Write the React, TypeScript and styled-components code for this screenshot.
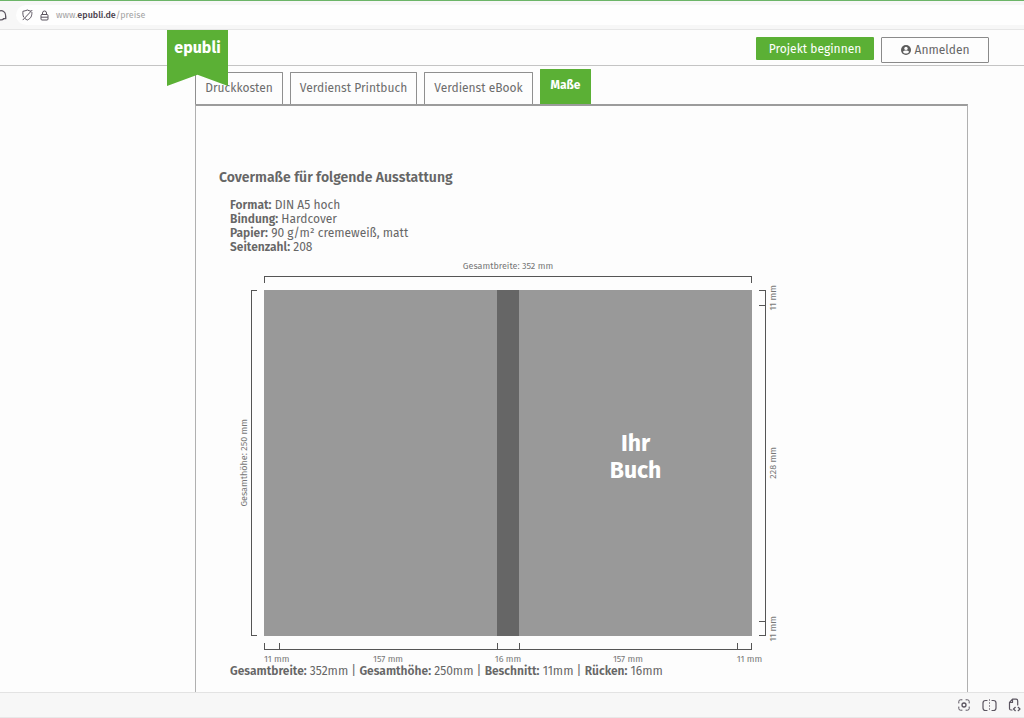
import React from "react";
import styled, { createGlobalStyle } from "styled-components";

const GlobalStyle = createGlobalStyle`
  * { box-sizing: border-box; }
  body {
    margin: 0;
    background: #fdfdfd;
    color: #666;
    font-family: "Fira Sans", "Noto Sans", sans-serif;
    font-size: 12px;
    line-height: 14px;
  }
`;

const Window = styled.div`
  min-height: 100vh;
  display: flex;
  flex-direction: column;
`;

const BrowserBar = styled.div`
  height: 30px;
  flex: none;
  display: flex;
  align-items: center;
  gap: 9px;
  background: #f7f7f7;
  border-top: 1px solid #6cb568;
  border-bottom: 1px solid #e6e6e6;
  overflow: hidden;
`;

const IconButton = styled.button`
  display: flex;
  padding: 0;
  border: 0;
  background: none;
  color: #5b5560;
`;

const ReloadButton = styled(IconButton)`
  margin-left: -5px;
`;

const AddressField = styled.div`
  flex: 1;
  height: 20px;
  display: flex;
  align-items: center;
  gap: 7px;
  padding-left: 6px;
  border-radius: 10px 0 0 10px;
  background: #fefefe;
`;

const Address = styled.div`
  color: #a3a3a3;
  font-size: 9px;
  line-height: 12px;
  strong { color: #4a3f4c; font-weight: 500; }
`;

const SiteHeader = styled.header`
  height: 36px;
  flex: none;
  display: flex;
  align-items: flex-start;
  padding: 0 35px 0 167px;
  border-bottom: 1px solid #c4c4c4;
`;

const Logo = styled.a`
  position: relative;
  z-index: 1;
  width: 61px;
  height: 56px;
  padding-top: 8px;
  background: #5bb035;
  clip-path: polygon(0 0, 100% 0, 100% 100%, 50% 80%, 0 100%);
  color: #fff;
  font-size: 16px;
  line-height: 20px;
  font-weight: 700;
  text-align: center;
  text-decoration: none;
`;

const Actions = styled.div`
  margin-left: auto;
  padding-top: 7px;
  display: flex;
  align-items: flex-start;
  gap: 7px;
`;

const ActionButton = styled.button<{ $primary?: boolean }>`
  display: flex;
  align-items: center;
  justify-content: center;
  gap: 4px;
  width: ${(p) => (p.$primary ? 118 : 108)}px;
  height: ${(p) => (p.$primary ? 23 : 26)}px;
  padding: 0;
  border: ${(p) => (p.$primary ? "0" : "1px solid #8a8a8a")};
  border-radius: 1px;
  background: ${(p) => (p.$primary ? "#5bb035" : "#fdfdfd")};
  color: ${(p) => (p.$primary ? "#fff" : "#666")};
  font: inherit;
  white-space: nowrap;
`;

const Main = styled.main`
  flex: 1;
  display: flex;
  flex-direction: column;
  padding: 3px 56px 0 195px;
`;

const Tabs = styled.nav`
  height: 35px;
  display: flex;
  align-items: flex-end;
  gap: 7px;
`;

const Tab = styled.button<{ $width: number; $active?: boolean }>`
  width: ${(p) => p.$width}px;
  height: ${(p) => (p.$active ? 35 : 32)}px;
  padding: 0 0 ${(p) => (p.$active ? 4 : 2)}px;
  border: 1px solid ${(p) => (p.$active ? "#5bb035" : "#8f8f8f")};
  border-bottom: 0;
  border-radius: 1px 1px 0 0;
  background: ${(p) => (p.$active ? "#5bb035" : "#fdfdfd")};
  color: ${(p) => (p.$active ? "#fff" : "#6c6c6c")};
  font: inherit;
  font-weight: ${(p) => (p.$active ? 700 : 400)};
  white-space: nowrap;
`;

const Panel = styled.section`
  flex: 1;
  padding: 63px 23px 12px;
  border: 1px solid #b0b0b0;
  border-top: 2px solid #9c9c9c;
  border-bottom: 0;
`;

const Title = styled.h2`
  margin: 0;
  font-size: 14px;
  line-height: 18px;
  font-weight: 600;
`;

const Specs = styled.div`
  margin: 11px 0 0 11px;
  b { font-weight: 600; }
`;

const Summary = styled.p`
  margin: -3px 0 0 11px;
  b { font-weight: 600; }
`;

const Figure = styled.figure`
  width: 540px;
  margin: 5px 0 0 20px;
  display: grid;
  grid-template-columns: 18px 488px 20px;
  grid-template-rows: 24px 346px 24px;
  gap: 7px;
  color: #777;
  font-size: 9px;
  line-height: 14px;
`;

const TopMeasure = styled.div`
  grid-column: 2;
  text-align: center;
`;

const TopBracket = styled.div`
  height: 7px;
  margin-top: 3px;
  border: 1px solid #555;
  border-bottom: 0;
`;

const LeftMeasure = styled.div`
  grid-column: 1;
  display: flex;
  align-items: center;
  justify-content: flex-end;
`;

const LeftBracket = styled.div`
  flex: none;
  width: 6px;
  height: 100%;
  border: 1px solid #555;
  border-right: 0;
`;

const SideLabel = styled.span`
  writing-mode: vertical-rl;
  transform: rotate(180deg);
  flex: none;
  white-space: nowrap;
`;

const Cover = styled.div`
  display: grid;
  grid-template-columns: 168fr 16fr 168fr;
  background: #999;
`;

const Spine = styled.div`
  grid-column: 2;
  background: #666;
`;

const CoverTitle = styled.div`
  display: flex;
  align-items: center;
  justify-content: center;
  padding-bottom: 12px;
  color: #fff;
  font-size: 23px;
  line-height: 27px;
  font-weight: 700;
  text-align: center;
`;

const RightMeasure = styled.div`
  display: grid;
  grid-template-rows: 11fr 228fr 11fr;
`;

const RightPart = styled.div`
  display: grid;
  grid-template-columns: 7px 14px;
  align-items: center;
  min-height: 0;
`;

const RightBracket = styled.div<{ $last?: boolean }>`
  height: 100%;
  border: solid #555;
  border-width: ${(p) => (p.$last ? "1px 1px 1px 0" : "1px 1px 0 0")};
`;

const RightLabel = styled.div`
  height: 0;
  display: flex;
  align-items: center;
`;

const BottomMeasure = styled.div`
  grid-column: 2;
  display: grid;
  grid-template-columns: 11fr 157fr 16fr 157fr 11fr;
`;

const BottomPart = styled.div<{ $edge?: boolean }>`
  min-width: 0;
  display: flex;
  flex-direction: column;
  align-items: ${(p) => (p.$edge ? "flex-start" : "center")};
  white-space: nowrap;
`;

const BottomBracket = styled.div<{ $last?: boolean }>`
  width: 100%;
  height: 7px;
  flex: none;
  margin-bottom: 2px;
  border: solid #555;
  border-width: ${(p) => (p.$last ? "0 1px 1px" : "0 0 1px 1px")};
`;

const StatusBar = styled.footer`
  height: 26px;
  flex: none;
  display: flex;
  align-items: center;
  justify-content: flex-end;
  gap: 11px;
  padding-right: 3px;
  background: #f7f7f7;
  border-top: 1px solid #e3e3e3;
  border-bottom: 1px solid #e8e8e8;
`;

const stroke = { fill: "none", stroke: "currentColor", strokeWidth: 1.2, strokeLinecap: "round", strokeLinejoin: "round" } as const;

const ReloadIcon = () => (
  <svg width="12" height="12" viewBox="0 0 12 12" {...stroke}>
    <path d="M9 9.8A4.6 4.6 0 1 1 10.6 6v3.6M8.2 9.7h2.6V7.4" />
  </svg>
);

const ShieldIcon = () => (
  <svg width="11" height="12" viewBox="0 0 11 12" {...stroke} strokeWidth={1}>
    <path d="M1.6 8C.8 6.500.8 4 .9 2.300Q3 2 5.400 1q1.600.8 3.200 1.100M9.900 3.500c.1 3.300-.9 6-4.500 7.500-.9-.3-1.600-.7-2.200-1.300M10 1.300 1 10.800" />
  </svg>
);

const LockIcon = () => (
  <svg width="9" height="11" viewBox="0 0 9 11" {...stroke} strokeWidth={1}>
    <rect x="1" y="4.500" width="7" height="5.500" rx="1" />
    <path d="M2.500 4.500V3a2 2 0 0 1 4 0v1.500M1.500 7.200h6" />
  </svg>
);

const UserIcon = () => (
  <svg width="10" height="10" viewBox="0 0 10 10">
    <circle cx="5" cy="5" r="5" fill="#5c5c5c" />
    <circle cx="5" cy="3.400" r="1.700" fill="#fdfdfd" />
    <path d="M2 7c0-1.200 2-1.600 3-1.600S8 5.800 8 7C7.300 8 6.300 8.600 5 8.600S2.700 8 2 7Z" fill="#fdfdfd" />
  </svg>
);

const CaptureIcon = () => (
  <svg width="13" height="12" viewBox="0 0 13 12" {...stroke} strokeWidth={1}>
    <path d="M.8 4V2.500Q.8.8 2.500.8H4M8 .8h1.500q1.700 0 1.700 1.700V4M11.200 8v1.500q0 1.700-1.700 1.700H8M4 11.200H2.500Q.8 11.200.8 9.500V8" />
    <circle cx="6" cy="6" r="2" strokeWidth={1.3} />
  </svg>
);

const SplitIcon = () => (
  <svg width="15" height="13" viewBox="0 0 15 13" {...stroke}>
    <path d="M5 1.500H3.500Q1 1.500 1 4v5q0 2.500 2.500 2.500H5M10 1.500h1.500Q14 1.500 14 4v5q0 2.500-2.500 2.500H10" />
    <path d="M7.500.5v12" strokeDasharray="1 2" strokeWidth={0.7} />
  </svg>
);

const PageCodeIcon = () => (
  <svg width="13" height="14" viewBox="0 0 13 14" {...stroke}>
    <path d="M4 12H3q-1.500 0-1.500-1.500V4.500L4.500 1.200h3.500q1.700 0 1.700 1.700V7M4.500 1.500v3h-3M7.300 9.300 5.500 11l1.800 1.700M10.200 9.300 12 11l-1.800 1.700" />
  </svg>
);

const bottomParts = [11, 157, 16, 157, 11];
const rightParts = [11, 228, 11];

export default function App() {
  return (
    <Window>
      <GlobalStyle />
      <BrowserBar>
        <ReloadButton aria-label="Neu laden"><ReloadIcon /></ReloadButton>
        <AddressField>
          <IconButton aria-label="Schutz"><ShieldIcon /></IconButton>
          <IconButton aria-label="Verbindung"><LockIcon /></IconButton>
          <Address role="textbox" aria-label="Adresse">www.<strong>epubli.de</strong>/preise</Address>
        </AddressField>
      </BrowserBar>
      <SiteHeader>
        <Logo href="#">epubli</Logo>
        <Actions>
          <ActionButton $primary>Projekt beginnen</ActionButton>
          <ActionButton><UserIcon />Anmelden</ActionButton>
        </Actions>
      </SiteHeader>
      <Main>
        <Tabs>
          <Tab $width={88}>Druckkosten</Tab>
          <Tab $width={127}>Verdienst Printbuch</Tab>
          <Tab $width={109}>Verdienst eBook</Tab>
          <Tab $width={51} $active>Maße</Tab>
        </Tabs>
        <Panel>
          <Title>Covermaße für folgende Ausstattung</Title>
          <Specs>
            <div><b>Format:</b> DIN A5 hoch</div>
            <div><b>Bindung:</b> Hardcover</div>
            <div><b>Papier:</b> 90 g/m² cremeweiß, matt</div>
            <div><b>Seitenzahl:</b> 208</div>
          </Specs>
          <Figure>
            <TopMeasure>Gesamtbreite: 352 mm<TopBracket /></TopMeasure>
            <LeftMeasure>
              <SideLabel>Gesamthöhe: 250 mm</SideLabel>
              <LeftBracket />
            </LeftMeasure>
            <Cover>
              <Spine />
              <CoverTitle>Ihr<br />Buch</CoverTitle>
            </Cover>
            <RightMeasure>
              {rightParts.map((mm, i) => (
                <RightPart key={i}>
                  <RightBracket $last={i === rightParts.length - 1} />
                  <RightLabel><SideLabel>{mm} mm</SideLabel></RightLabel>
                </RightPart>
              ))}
            </RightMeasure>
            <BottomMeasure>
              {bottomParts.map((mm, i) => (
                <BottomPart key={i} $edge={mm === 11}>
                  <BottomBracket $last={i === bottomParts.length - 1} />
                  <span>{mm} mm</span>
                </BottomPart>
              ))}
            </BottomMeasure>
          </Figure>
          <Summary>
            <b>Gesamtbreite:</b> 352mm | <b>Gesamthöhe:</b> 250mm | <b>Beschnitt:</b> 11mm | <b>Rücken:</b> 16mm
          </Summary>
        </Panel>
      </Main>
      <StatusBar>
        <IconButton aria-label="Bildschirmfoto"><CaptureIcon /></IconButton>
        <IconButton aria-label="Geteilte Ansicht"><SplitIcon /></IconButton>
        <IconButton aria-label="Quelltext"><PageCodeIcon /></IconButton>
      </StatusBar>
    </Window>
  );
}
